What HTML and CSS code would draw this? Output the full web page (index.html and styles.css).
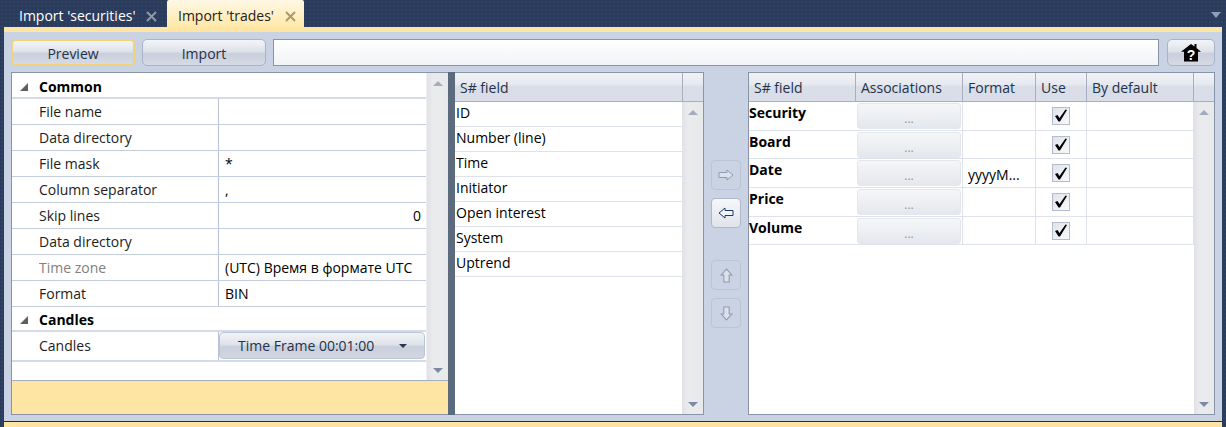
FILE: index.html
```
<!DOCTYPE html>
<html>
<head>
	<title>Import</title>
	<link rel="stylesheet" href="styles.css">
</head>
<body>
	<div class="tabs">
		<div class="tab">Import 'securities' <svg class="tab-x" width="11" height="11" viewBox="0 0 11 11"><path d="M1 1L10 10M10 1L1 10"/></svg></div>
		<div class="tab tab-active">Import 'trades' <svg class="tab-x" width="11" height="11" viewBox="0 0 11 11"><path d="M1 1L10 10M10 1L1 10"/></svg></div>
		<div class="tabs-menu"></div>
	</div>
	<div class="strip"></div>
	<div class="window">
		<div class="toolbar">
			<div class="btn btn-focus">Preview</div>
			<div class="btn">Import</div>
			<div class="path"></div>
			<div class="btn btn-home">
				<svg width="20" height="19" viewBox="0 0 20 19"><path d="M10 1 L13.500 3.600 L13.500 1 L15.500 1 L15.500 5.100 L20 8.800 L17 8.800 L17 18.500 L3 18.500 L3 8.800 L0 8.800 Z" fill="#000"/><text x="10" y="16.500" class="home-q">?</text></svg>
			</div>
		</div>
		<div class="panels">
			<div class="left-panel">
				<div class="props">
					<div class="props-body">
						<div class="group"><span class="tri"></span>Common</div>
						<div class="prop"><div class="k">File name</div><div class="v"></div></div>
						<div class="prop"><div class="k">Data directory</div><div class="v"></div></div>
						<div class="prop"><div class="k">File mask</div><div class="v">*</div></div>
						<div class="prop"><div class="k">Column separator</div><div class="v">,</div></div>
						<div class="prop"><div class="k">Skip lines</div><div class="v v-num">0</div></div>
						<div class="prop"><div class="k">Data directory</div><div class="v"></div></div>
						<div class="prop"><div class="k k-off">Time zone</div><div class="v">(UTC) Время в формате UTC</div></div>
						<div class="prop"><div class="k">Format</div><div class="v">BIN</div></div>
						<div class="group group-2"><span class="tri"></span>Candles</div>
						<div class="prop prop-tall"><div class="k">Candles</div><div class="v v-btn"><div class="combo"><span>Time Frame 00:01:00</span><i class="combo-arrow"></i></div></div></div>
					</div>
					<div class="scroll"><i class="up"></i><i class="down"></i></div>
				</div>
				<div class="desc"></div>
			</div>
			<div class="splitter"></div>
			<div class="mid-panel">
				<div class="head"><div class="hc hc-field">S# field</div><div class="hc hc-fill"></div></div>
				<div class="grid-body">
					<div class="list">
						<div class="li">ID</div>
						<div class="li">Number (line)</div>
						<div class="li">Time</div>
						<div class="li">Initiator</div>
						<div class="li">Open interest</div>
						<div class="li">System</div>
						<div class="li">Uptrend</div>
					</div>
					<div class="scroll"><i class="up"></i><i class="down"></i></div>
				</div>
			</div>
			<div class="arrows">
				<div class="ab ab-off"><svg width="16" height="12" viewBox="0 0 16 12"><path d="M1 3.500H9V1L15 6L9 11V8.500H1Z" class="ar"/></svg></div>
				<div class="ab"><svg width="16" height="12" viewBox="0 0 16 12"><path d="M15 3.500H7V1L1 6L7 11V8.500H15Z" class="ar ar-on"/></svg></div>
				<div class="ab ab-off ab-gap"><svg width="13" height="15" viewBox="0 0 12 14"><path d="M3.500 13V6.500H1L6 1L11 6.500H8.500V13Z" class="ar"/></svg></div>
				<div class="ab ab-off"><svg width="13" height="15" viewBox="0 0 12 14"><path d="M3.500 1V7.500H1L6 13L11 7.500H8.500V1Z" class="ar"/></svg></div>
			</div>
			<div class="right-panel">
				<div class="head">
					<div class="hc c1">S# field</div>
					<div class="hc c2">Associations</div>
					<div class="hc c3">Format</div>
					<div class="hc c4">Use</div>
					<div class="hc c5">By default</div>
					<div class="hc hc-fill"></div>
				</div>
				<div class="grid-body">
					<div class="list">
						<div class="tr"><div class="td c1 name">Security</div><div class="td c2"><div class="dots">...</div></div><div class="td c3"></div><div class="td c4"><span class="chk"><svg width="14" height="13" viewBox="0 0 14 13"><path d="M1 7L3.500 6L5.500 9L11.500 0.500L13 1L6 12.500H4.500Z"/></svg></span></div><div class="td c5"></div></div>
						<div class="tr"><div class="td c1 name">Board</div><div class="td c2"><div class="dots">...</div></div><div class="td c3"></div><div class="td c4"><span class="chk"><svg width="14" height="13" viewBox="0 0 14 13"><path d="M1 7L3.500 6L5.500 9L11.500 0.500L13 1L6 12.500H4.500Z"/></svg></span></div><div class="td c5"></div></div>
						<div class="tr"><div class="td c1 name">Date</div><div class="td c2"><div class="dots">...</div></div><div class="td c3 fmt">yyyyM...</div><div class="td c4"><span class="chk"><svg width="14" height="13" viewBox="0 0 14 13"><path d="M1 7L3.500 6L5.500 9L11.500 0.500L13 1L6 12.500H4.500Z"/></svg></span></div><div class="td c5"></div></div>
						<div class="tr"><div class="td c1 name">Price</div><div class="td c2"><div class="dots">...</div></div><div class="td c3"></div><div class="td c4"><span class="chk"><svg width="14" height="13" viewBox="0 0 14 13"><path d="M1 7L3.500 6L5.500 9L11.500 0.500L13 1L6 12.500H4.500Z"/></svg></span></div><div class="td c5"></div></div>
						<div class="tr"><div class="td c1 name">Volume</div><div class="td c2"><div class="dots">...</div></div><div class="td c3"></div><div class="td c4"><span class="chk"><svg width="14" height="13" viewBox="0 0 14 13"><path d="M1 7L3.500 6L5.500 9L11.500 0.500L13 1L6 12.500H4.500Z"/></svg></span></div><div class="td c5"></div></div>
					</div>
					<div class="scroll"><i class="up"></i><i class="down"></i></div>
				</div>
			</div>
		</div>
	</div>
	<div class="bottom"></div>
</body>
</html>
```
FILE: styles.css
```
html, body{
	margin: 0;
	height: 427px;
	overflow: hidden;
}
body{
	background-color: #2b3b5a;
	background-image: radial-gradient(#30426a 1px, transparent 1px);
	background-size: 4px 4px;
	font-family: "Open Sans", "Noto Sans", sans-serif;
	font-size: 14px;
	color: #000;
}

/* tabs */
.tabs{
	height: 27px;
	display: flex;
	padding-left: 4px;
	position: relative;
}
.tab{
	width: 163px;
	box-sizing: border-box;
	padding-left: 15px;
	line-height: 32px;
	color: #fff;
	white-space: nowrap;
}
.tab-active{
	width: 137px;
	padding-left: 11px;
	color: #222;
	border-radius: 2px 2px 0 0;
	background: linear-gradient(#fff8e6, #ffe8a8);
}
.tab-x{
	margin-left: 7px;
	vertical-align: -1px;
	fill: none;
	stroke: #8e99ab;
	stroke-width: 2;
}
.tab-active .tab-x{
	stroke: #a89a72;
}
.tabs-menu{
	position: absolute;
	right: 5px;
	top: 12px;
	border-top: 6px solid #8d9fbf;
	border-left: 5px solid transparent;
	border-right: 5px solid transparent;
}
.strip{
	height: 5px;
	margin: 0 4px;
	background: #ffe5a3;
}

/* main area */
.window{
	height: 389px;
	margin: 0 4px;
	box-sizing: border-box;
	padding: 7px 7px 6px;
	background: #c9d3e3;
	display: flex;
	flex-direction: column;
	gap: 6px;
}
.toolbar{
	height: 27px;
	display: flex;
	gap: 7px;
}
.btn{
	width: 124px;
	box-sizing: border-box;
	border: 1px solid #a9b3c6;
	border-radius: 5px;
	background: linear-gradient(#f2f4f7, #dfe3ea 45%, #c9cfdc 55%, #d6dae4);
	color: #24324a;
	text-align: center;
	line-height: 28px;
}
.btn-focus{
	border: 2px solid #f0d27c;
	line-height: 26px;
}
.path{
	width: 886px;
	box-sizing: border-box;
	border: 1px solid #8a94a8;
	background: linear-gradient(#fff, #f1f3f6);
}
.btn-home{
	width: 48px;
	margin-left: 1px;
	display: flex;
	align-items: center;
	justify-content: center;
}
.home-q{
	font-family: "Liberation Sans", sans-serif;
	font-size: 14px;
	font-weight: bold;
	fill: #fff;
	text-anchor: middle;
}
.panels{
	height: 343px;
	display: flex;
}

/* property grid */
.left-panel{
	width: 437px;
	box-sizing: border-box;
	border: 1px solid #8a94a8;
	border-right: none;
	background: #fff;
	display: flex;
	flex-direction: column;
}
.props{
	height: 307px;
	display: flex;
	border-bottom: 1px solid #a6afc0;
}
.props-body{
	width: 414px;
	border-right: 1px solid #eef0f3;
}
.group{
	height: 21px;
	padding: 3px 0 0 8px;
	line-height: 21px;
	font-weight: bold;
	display: flex;
	align-items: center;
	border-bottom: 2px solid #d5dbe6;
}
.group-2{
	height: 20px;
	line-height: 20px;
}
.tri{
	width: 0;
	height: 0;
	border-bottom: 8px solid #5f5f5f;
	border-left: 8px solid transparent;
	margin-right: 11px;
}
.prop{
	height: 25px;
	display: flex;
	border-bottom: 1px solid #c4cddc;
	line-height: 26px;
}
.prop-tall{
	height: 28px;
	line-height: 28px;
	border-bottom: 2px solid #d5dbe6;
}
.k{
	width: 207px;
	box-sizing: border-box;
	padding-left: 27px;
	border-right: 1px solid #b8c2d4;
	color: #1c1c1c;
}
.k-off{
	color: #808080;
}
.v{
	flex: 1;
	padding-left: 6px;
	white-space: nowrap;
}
.v-num{
	text-align: right;
	padding-right: 5px;
}
.v-btn{
	padding: 0 1px 0 0;
}
.combo{
	height: 27px;
	box-sizing: border-box;
	border: 1px solid #bcc5d5;
	border-radius: 4px;
	background: linear-gradient(#f1f3f6, #dfe3ea 45%, #c9cfdc 55%, #d2d6e0);
	color: #24324a;
	display: flex;
	align-items: center;
	padding: 0 17px 0 18px;
	justify-content: space-between;
	line-height: 27px;
}
.combo-arrow{
	border-top: 4px solid #2a3550;
	border-left: 4px solid transparent;
	border-right: 4px solid transparent;
}
.desc{
	flex: 1;
	background: #ffe5a3;
}

/* scrollbars */
.scroll{
	flex: 1;
	background: linear-gradient(90deg, #e0e2e6, #eaebed 30%, #e8e9eb);
	display: flex;
	flex-direction: column;
	justify-content: space-between;
	align-items: center;
	padding: 8px 0 7px;
}
.up{
	border-bottom: 5px solid #a3adc0;
	border-left: 5px solid transparent;
	border-right: 5px solid transparent;
}
.down{
	border-top: 5px solid #7e8aa4;
	border-left: 5px solid transparent;
	border-right: 5px solid transparent;
}
.splitter{
	width: 7px;
	background: #5c6a7e;
}

/* grids */
.mid-panel, .right-panel{
	box-sizing: border-box;
	border: 1px solid #8a94a8;
	background: #fff;
	display: flex;
	flex-direction: column;
}
.mid-panel{
	width: 249px;
	border-left: none;
}
.right-panel{
	width: 467px;
}
.head{
	height: 29px;
	flex: none;
	display: flex;
	box-sizing: border-box;
	border-bottom: 1px solid #a6afc0;
	background: linear-gradient(#f0f2f5, #e6e9ef 40%, #d8dde7 50%, #d9dee8);
}
.hc{
	box-sizing: border-box;
	border-right: 1px solid #a6afc0;
	padding-left: 5px;
	line-height: 29px;
	color: #24324a;
}
.hc-field{
	width: 228px;
}
.hc-fill{
	flex: 1;
	border-right: none;
}
.grid-body{
	flex: 1;
	display: flex;
}
.list{
	width: 227px;
	flex: none;
}
.right-panel .list{
	width: 445px;
}
.li{
	height: 24px;
	padding-left: 1px;
	border-bottom: 1px solid #dde2ec;
	line-height: 22px;
	white-space: nowrap;
}
.c1{ width: 107px; }
.c2{ width: 107px; }
.c3{ width: 73px; }
.c4{ width: 51px; }
.c5{ width: 107px; }
.tr{
	height: 27.700px;
	display: flex;
	border-bottom: 1px solid #dde2ec;
}
.td{
	box-sizing: border-box;
	border-right: 1px solid #dde2ec;
}
.name{
	font-weight: bold;
	line-height: 22px;
	border-right: none;
}
.td.c2{
	padding: 1px;
}
.dots{
	height: 26px;
	box-sizing: border-box;
	border: 1px solid #e3e6ec;
	border-radius: 3px;
	background: linear-gradient(#f5f6f8, #edeff3 50%, #e4e7ec);
	color: #8d94a3;
	font-size: 12px;
	text-align: center;
	line-height: 29px;
}
.fmt{
	padding-left: 5px;
	line-height: 31px;
}
.td.c4{
	display: flex;
	align-items: center;
	justify-content: center;
}
.chk{
	width: 18px;
	height: 18px;
	box-sizing: border-box;
	border: 1px solid #b4bccb;
	background: linear-gradient(135deg, #dfe3eb, #f8f9fb);
	display: flex;
	align-items: center;
	justify-content: center;
}
.chk svg{
	fill: #000;
}

/* move buttons */
.arrows{
	width: 44px;
	display: flex;
	flex-direction: column;
	align-items: center;
	padding-top: 88px;
	gap: 8px;
	box-sizing: border-box;
}
.ab{
	width: 30px;
	height: 30px;
	box-sizing: border-box;
	border: 1px solid #aeb8ca;
	border-radius: 4px;
	background: linear-gradient(#f6f7f9, #dfe3ea);
	display: flex;
	align-items: center;
	justify-content: center;
}
.ab-off{
	background: #c9d3e3;
	border-color: #bac4d5;
}
.ab-gap{
	margin-top: 24px;
}
.ar{
	fill: #dde2ea;
	stroke: #8f9bb0;
	stroke-width: 1;
}
.ar-on{
	fill: #f2f4f8;
	stroke: #1c3a70;
}
.bottom{
	height: 6px;
	margin-left: 4px;
	margin-right: 4px;
	border-top: 1px solid #1f2d48;
	background: #ffe5a3;
}
```
